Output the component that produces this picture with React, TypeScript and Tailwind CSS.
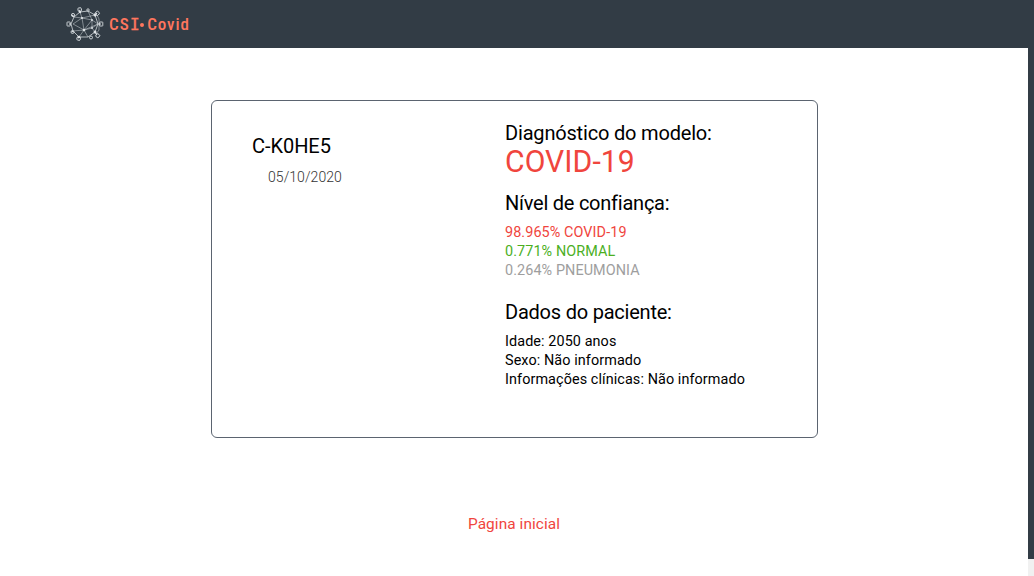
function Virus() {
  return (
    <svg className="h-9 w-[38px] shrink-0" viewBox="66 6 38 36" fill="none" stroke="#d5dade" strokeWidth=".8">
      <path d="M80 12L88 11L95 15L98 24L95 32L88 37L79 37L73 31L71 24L74 17Z" />
      <path d="M80 12L82 18L95 15M74 17L82 18L73 24L84 30L79 37M82 18L92 20L98 24L84 30L73 31M92 20L88 11M92 20L84 30L88 37M98 24L92 28L84 30M95 32L92 28V20M82 18L84 30M97 15L99 19V30L96 34" strokeWidth=".5" />
      <path d="M80 12L79 10M95 15L97 13M98 24H101M95 32L97 35M79 37L78 38M73 31L72 32M71 24H69M74 17L72 15" strokeWidth="1.2" />
      <g strokeWidth=".9">
        <rect x="78" y="7.8" width="3.4" height="3.4" rx=".8" transform="rotate(-12 80 9.5)" />
        <circle cx="88" cy="10" r="1.2" />
        <rect x="95.5" y="11.5" width="3.6" height="3.6" rx=".8" transform="rotate(40 97.3 13.3)" />
        <rect x="99.5" y="22" width="3.3" height="4" rx=".5" />
        <rect x="96" y="34" width="3.4" height="3.4" rx=".8" transform="rotate(35 97.7 35.7)" />
        <circle cx="91" cy="37.5" r="1.5" />
        <rect x="77" y="36.8" width="3.4" height="3.4" rx=".8" transform="rotate(20 78.7 38.5)" />
        <circle cx="72.5" cy="32" r="1.5" />
        <rect x="67" y="22" width="3.3" height="4" rx=".5" />
        <circle cx="73" cy="15" r="1.6" />
      </g>
      <g fill="#dfe3e6" stroke="none">
        <circle cx="82" cy="18" r="1.1" /><circle cx="92" cy="20" r=".9" />
        <circle cx="84" cy="30" r="1.3" /><circle cx="92" cy="28" r=".9" />
        <circle cx="95" cy="15" r="1.5" /><circle cx="80" cy="12" r="1.2" />
        <circle cx="79" cy="37" r="1.3" /><circle cx="95" cy="32" r="1.5" />
      </g>
    </svg>
  );
}

export default function App() {
  return (
    <div className="flex h-[576px] w-[1034px] flex-col overflow-hidden bg-white font-['Roboto',sans-serif] text-black">
      <header className="flex h-12 shrink-0 items-center bg-[#323c45] pl-[66px]">
        <Virus />
        <span className="ml-[5px] mt-0.5 flex items-center whitespace-nowrap font-['Roboto_Condensed','Roboto',sans-serif] text-[17px] font-medium text-[#ff765e]">
          <span className="tracking-[1.2px]">CS<span className="font-['DejaVu_Sans_Mono',monospace] text-[16px] font-normal tracking-[-0.5px] [-webkit-text-stroke:0.4px_#ff765e]">I</span></span>
          <span className="mr-[3px] ml-px size-1 rounded-full bg-[#ff765e]" />
          <span className="tracking-[0.9px]">Covid</span>
        </span>
      </header>
      <div className="flex flex-1">
        <main className="flex w-[1028px] flex-col items-center pt-[52px]">
          <section className="ml-px flex h-[338px] w-[607px] rounded-[6px] border border-[#5b6470]">
            <div className="w-[293px] pl-10 pt-[33px]">
              <h1 className="text-[20px] leading-6 tracking-[-0.05px]">C-K0HE5</h1>
              <p className="ml-4 mt-[10px] text-[14px] font-light leading-[19px] tracking-[0.06px] text-[#333]">05/10/2020</p>
            </div>
            <div className="whitespace-nowrap pt-5 text-[14.4px] leading-[19px] tracking-[0.09px]">
              <h2 className="text-[20px] leading-6 tracking-[-0.18px]">Diagnóstico do modelo:</h2>
              <p className="origin-left scale-x-[0.94] text-[32px] leading-8 text-[#f0453d]">COVID-19</p>
              <h2 className="mt-[14px] text-[20px] leading-6 tracking-[-0.24px]">Nível de confiança:</h2>
              <div className="mt-2">
                <p className="text-[#f0453d]">98.965% COVID-19</p>
                <p className="text-[#4caf1f]">0.771% NORMAL</p>
                <p className="text-[#9e9e9e]">0.264% PNEUMONIA</p>
              </div>
              <h2 className="mt-5 text-[20px] leading-6 tracking-[-0.22px]">Dados do paciente:</h2>
              <div className="mt-2">
                <p>Idade: 2050 anos</p>
                <p>Sexo: Não informado</p>
                <p>Informações clínicas: Não informado</p>
              </div>
            </div>
          </section>
          <a className="mt-[76px] text-[15.4px] leading-5 tracking-[0.08px] text-[#f0453d]" href="#">Página inicial</a>
        </main>
        <div className="flex w-[6px] flex-col bg-[#f1f1f1]">
          <div className="h-[511px] bg-[#323c45]" />
        </div>
      </div>
    </div>
  );
}
